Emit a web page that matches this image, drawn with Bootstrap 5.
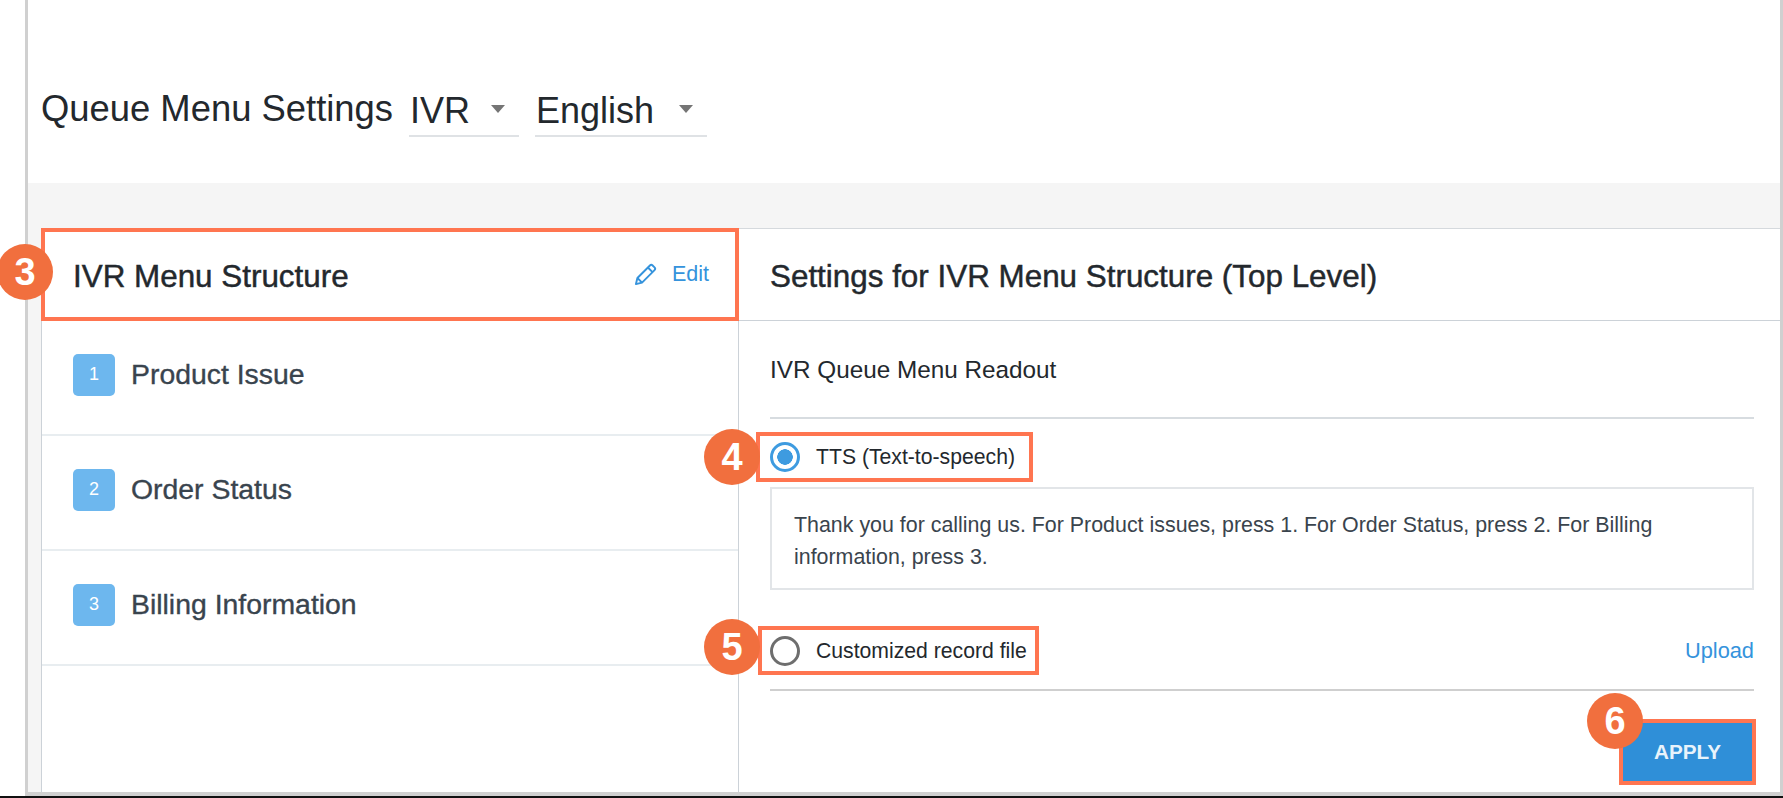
<!DOCTYPE html>
<html lang="en">
<head>
<meta charset="utf-8">
<title>Queue Menu Settings</title>
<link href="https://cdn.jsdelivr.net/npm/bootstrap@5.3.0/dist/css/bootstrap.min.css" rel="stylesheet">
<style>
html,body{height:798px;overflow:hidden;background:#fff}
body{font-family:"Liberation Sans",Arial,sans-serif;color:#23282d}
.shot{height:796px;margin-left:25px;border-left:3px solid #d0d0d0;border-right:3px solid #d0d0d0;border-bottom:4px solid #d0d0d0}
.edge{height:2px;background:#111}
.topbar{height:183px;flex:none;padding-left:13px;padding-top:36px}
.page-title{font-size:36.400px;font-weight:400;line-height:1;margin:0;color:#23282d;white-space:nowrap}
.pick{height:46px;border-bottom:2px solid #dfe2e5;font-size:36px;line-height:40px;padding-left:1px;position:relative;top:4px}
.pick-a{width:110px;margin-left:16px}
.pick-b{width:172px;margin-left:16px}
.caret{width:0;height:0;border-left:7px solid transparent;border-right:7px solid transparent;border-top:8px solid #757575;position:absolute;right:14px;top:14px}
.band{background:#f5f5f5;padding:45px 0 0 13px;min-height:0}
.sheet{background:#fff;height:564px;overflow:visible}
.left-pane{width:698px;flex:none;border-left:1px solid #ccd2d8;border-right:1px solid #ccd2d8}
.right-pane{border-top:1px solid #d5d9dd}
.mark-box{border:4px solid #ff7550;position:relative}
.left-head{height:93px;margin-left:-1px;margin-right:-1px;padding:4px 26px 0 28px;background:#fff}
.pane-title{font-size:31.400px;font-weight:400;margin:0;-webkit-text-stroke:.45px currentColor;color:#23282d}
.edit-link{color:#3593dc;font-size:21.500px;text-decoration:none;position:relative;top:-2px;gap:14px}
.menu-row{height:115px;padding-left:31px;border-bottom:2px solid #e8edf0;padding-bottom:6px}
.num-tile{width:42px;height:42px;border-radius:5px;background:#6db7ee;color:#fff;font-size:18px;margin-right:16px}
.menu-text{font-size:28.400px;color:#39444e;-webkit-text-stroke:.35px currentColor}
.right-head{height:92px;padding-left:31px;padding-top:4px;border-bottom:1px solid #ccd2d8}
.right-body{padding:0 26px 0 31px}
.readout{height:98px;padding-top:3px;border-bottom:2px solid #d7dce0;font-size:24.300px;color:#23282d}
.radio-box{height:50px;display:inline-flex;align-items:center;padding-left:10px;padding-right:8px;font-size:21.200px;white-space:nowrap}
.radio-a{margin-top:13px;margin-left:-14px;width:277px}
.radio-b{margin-left:-12px;width:281px;height:49px;padding-left:8px}
.form-check-input.radio-dot{width:30px;height:30px;margin:0 16px 0 0;border:3px solid #6e6e6e;flex:none;background-image:none;box-shadow:none}
.form-check-input.radio-dot:checked{border-color:#3e9be0;background-color:#fff;background-image:radial-gradient(circle,#3e9be0 0 7.500px,#fff 8px)}
.tts-text{margin-top:5px;height:103px;border:2px solid #e2e5e8;padding:20px 22px;font-size:21.400px;line-height:32px;color:#3a444d}
.record-row{margin-top:36px;height:49px}
.upload-link{color:#3593dc;font-size:21.800px;text-decoration:none;position:relative;top:1px}
.rule-line{margin-top:14px;height:2px;background:#cfcfcf}
.apply-wrap{margin-top:28px;margin-right:-2px}
.apply-btn{width:129px;height:58px;background:#2f8fd8;color:#e8f3fb;font-size:20.700px;font-weight:700;border-radius:0;padding:0;display:flex;align-items:center;justify-content:center;border:0}
.step{width:56px;height:56px;border-radius:50%;background:#f16f3e;color:#fff;font-size:38px;font-weight:700;position:absolute;z-index:3}
.step-3{left:-48px;top:12px}
.step-4{left:-56px;top:-7px}
.step-5{left:-58px;top:-11px}
.step-6{left:-36px;top:-30px}
</style>
</head>
<body>
<div class="shot d-flex flex-column">
  <div class="topbar d-flex align-items-center">
    <h1 class="page-title">Queue Menu Settings</h1>
    <div class="pick pick-a">IVR<span class="caret"></span></div>
    <div class="pick pick-b">English<span class="caret"></span></div>
  </div>
  <div class="band flex-grow-1">
    <div class="sheet d-flex">
      <div class="left-pane">
        <div class="left-head mark-box d-flex align-items-center justify-content-between">
          <span class="step step-3 d-flex align-items-center justify-content-center">3</span>
          <h2 class="pane-title">IVR Menu Structure</h2>
          <a class="edit-link d-flex align-items-center" href="#">
            <svg width="25" height="25" viewBox="0 0 26 26" fill="none" stroke="#3593dc" stroke-width="2" stroke-linejoin="round"><path d="M3 23l1.6-6.4L17.6 3.6a2 2 0 0 1 2.8 0l2 2a2 2 0 0 1 0 2.8L9.4 21.400z"/><path d="M15.500 5.700l4.800 4.800M4.600 16.600l4.800 4.800"/></svg>
            Edit
          </a>
        </div>
        <div class="menu-row d-flex align-items-center"><span class="num-tile d-flex align-items-center justify-content-center">1</span><span class="menu-text">Product Issue</span></div>
        <div class="menu-row d-flex align-items-center"><span class="num-tile d-flex align-items-center justify-content-center">2</span><span class="menu-text">Order Status</span></div>
        <div class="menu-row d-flex align-items-center"><span class="num-tile d-flex align-items-center justify-content-center">3</span><span class="menu-text">Billing Information</span></div>
      </div>
      <div class="right-pane flex-grow-1">
        <div class="right-head d-flex align-items-center"><h2 class="pane-title">Settings for IVR Menu Structure (Top Level)</h2></div>
        <div class="right-body">
          <div class="readout d-flex align-items-center">IVR Queue Menu Readout</div>
          <div class="radio-box radio-a mark-box">
            <span class="step step-4 d-flex align-items-center justify-content-center">4</span>
            <input class="form-check-input radio-dot" type="radio" name="src" checked aria-label="TTS">
            <span>TTS (Text-to-speech)</span>
          </div>
          <div class="tts-text">Thank you for calling us. For Product issues, press 1. For Order Status, press 2. For Billing information, press 3.</div>
          <div class="record-row d-flex align-items-center justify-content-between">
            <div class="radio-box radio-b mark-box">
              <span class="step step-5 d-flex align-items-center justify-content-center">5</span>
              <input class="form-check-input radio-dot" type="radio" name="src" aria-label="Customized">
              <span>Customized record file</span>
            </div>
            <a class="upload-link" href="#">Upload</a>
          </div>
          <div class="rule-line"></div>
          <div class="apply-wrap d-flex justify-content-end">
            <div class="mark-box">
              <span class="step step-6 d-flex align-items-center justify-content-center">6</span>
              <button class="btn apply-btn" type="button">APPLY</button>
            </div>
          </div>
        </div>
      </div>
    </div>
  </div>
</div>
<div class="edge"></div>
<script src="https://cdn.jsdelivr.net/npm/bootstrap@5.3.0/dist/js/bootstrap.bundle.min.js"></script>
</body>
</html>
